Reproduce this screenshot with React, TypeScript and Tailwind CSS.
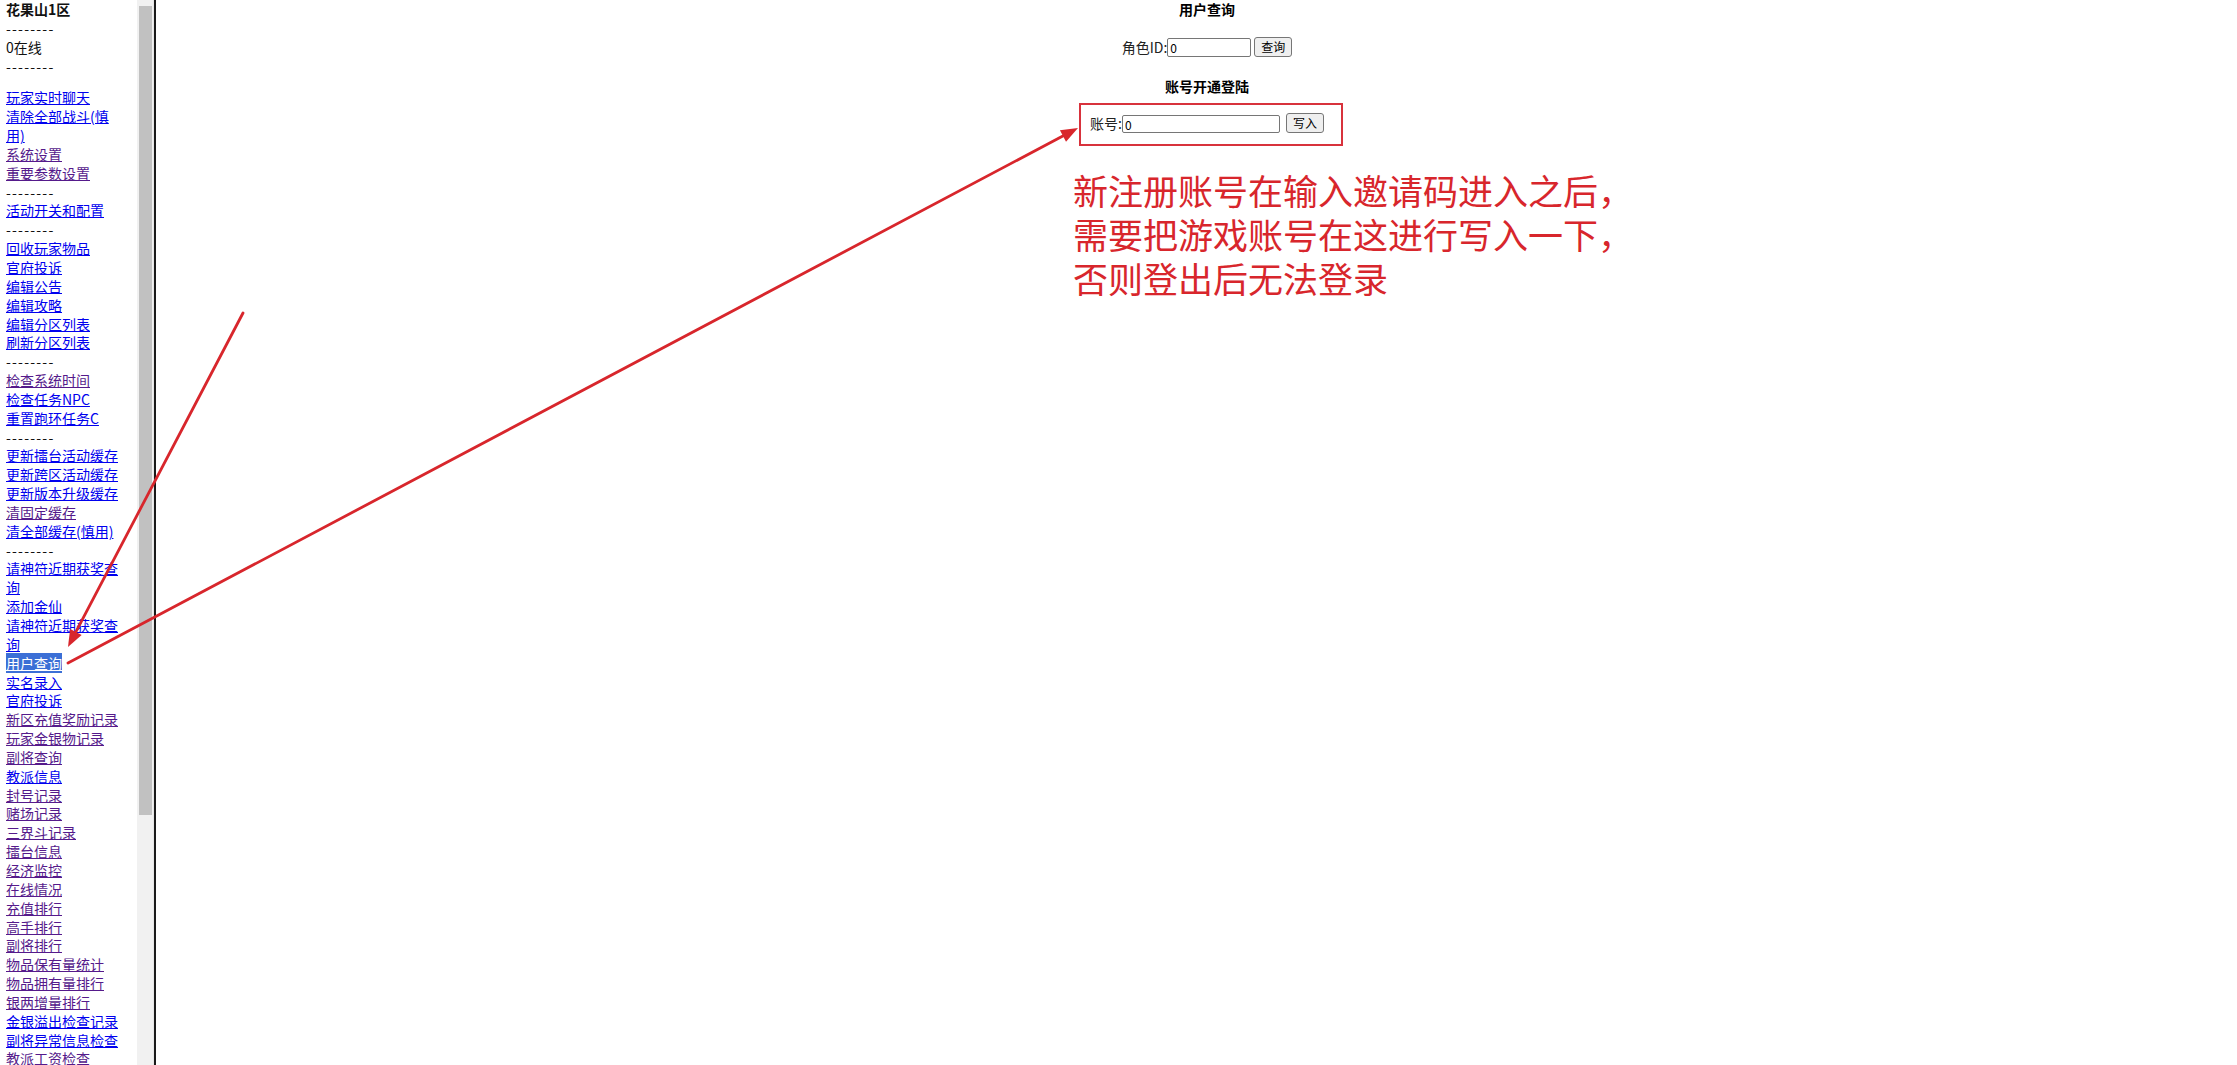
import React from 'react';

type NavItem =
  | { kind: 'link'; text: string; visited?: boolean; active?: boolean }
  | { kind: 'text'; text: string; bold?: boolean }
  | { kind: 'dash' }
  | { kind: 'gap' };

const b = (text: string): NavItem => ({ kind: 'link', text });
const p = (text: string): NavItem => ({ kind: 'link', text, visited: true });
const dash: NavItem = { kind: 'dash' };

const navItems: NavItem[] = [
  { kind: 'text', text: '花果山1区', bold: true },
  dash,
  { kind: 'text', text: '0在线' },
  dash,
  { kind: 'gap' },
  b('玩家实时聊天'),
  b('清除全部战斗(慎用)'),
  p('系统设置'),
  p('重要参数设置'),
  dash,
  b('活动开关和配置'),
  dash,
  b('回收玩家物品'),
  b('官府投诉'),
  b('编辑公告'),
  b('编辑攻略'),
  b('编辑分区列表'),
  b('刷新分区列表'),
  dash,
  p('检查系统时间'),
  b('检查任务NPC'),
  b('重置跑环任务C'),
  dash,
  b('更新擂台活动缓存'),
  b('更新跨区活动缓存'),
  b('更新版本升级缓存'),
  p('清固定缓存'),
  b('清全部缓存(慎用)'),
  dash,
  b('请神符近期获奖查询'),
  b('添加金仙'),
  b('请神符近期获奖查询'),
  { kind: 'link', text: '用户查询', active: true },
  b('实名录入'),
  b('官府投诉'),
  p('新区充值奖励记录'),
  p('玩家金银物记录'),
  p('副将查询'),
  b('教派信息'),
  p('封号记录'),
  p('赌场记录'),
  p('三界斗记录'),
  p('擂台信息'),
  p('经济监控'),
  p('在线情况'),
  p('充值排行'),
  p('高手排行'),
  p('副将排行'),
  p('物品保有量统计'),
  p('物品拥有量排行'),
  p('银两增量排行'),
  b('金银溢出检查记录'),
  b('副将异常信息检查'),
  p('教派工资检查'),
];

function Arrow({ x1, y1, x2, y2 }: { x1: number; y1: number; x2: number; y2: number }) {
  const dx = x2 - x1;
  const dy = y2 - y1;
  const len = Math.hypot(dx, dy);
  const ux = dx / len;
  const uy = dy / len;
  const L = 17;
  const W = 6.5;
  const bx = x2 - ux * L;
  const by = y2 - uy * L;
  const head = `${x2},${y2} ${bx + uy * W},${by - ux * W} ${bx - uy * W},${by + ux * W}`;
  return (
    <g>
      <line x1={x1} y1={y1} x2={bx + ux * 2} y2={by + uy * 2} stroke="#d8262c" strokeWidth={2.8} strokeLinecap="round" />
      <polygon points={head} fill="#d8262c" />
    </g>
  );
}

function Sidebar() {
  return (
    <div className="flex h-full shrink-0">
      <div className="w-[137px] overflow-hidden pl-[6px] text-[14px] leading-[18.84px] text-[#111]">
        <div className="w-[117px]">
          {navItems.map((item, i) => {
            if (item.kind === 'dash') {
              return (
                <div key={i} className="tracking-[1.2px]">
                  --------
                </div>
              );
            }
            if (item.kind === 'gap') return <div key={i} className="h-[13px]" />;
            if (item.kind === 'text') {
              return (
                <div key={i} className={item.bold ? 'font-bold' : ''}>
                  {item.text}
                </div>
              );
            }
            return (
              <div key={i}>
                <a
                  href="#"
                  className={
                    item.active
                      ? 'bg-[#3b6fd6] text-white underline'
                      : item.visited
                        ? 'text-[#551a8b] underline'
                        : 'text-[#0000ee] underline'
                  }
                >
                  {item.text}
                </a>
              </div>
            );
          })}
        </div>
      </div>
      {/* frame scrollbar */}
      <div className="flex w-[16px] justify-center bg-[#f1f1f1] pt-[6px]">
        <div className="h-[809px] w-[13px] bg-[#c1c1c1]" />
      </div>
      <div className="w-[1px] bg-[#e6e6e6]" />
      <div className="w-[2px] bg-[#1a1a1a]" />
    </div>
  );
}

function MainFrame() {
  return (
    <div className="flex flex-1 flex-col items-center pl-[21px] text-[14px] leading-[19px] text-[#222]">
      <div className="h-[19px] font-bold text-black">用户查询</div>
      <div className="mt-[18px] flex h-[20px] items-end">
        <span className="leading-[19px]">角色ID:</span>
        <input
          readOnly
          value="0"
          className="h-[19px] w-[84px] rounded-[2px] border border-[#767676] px-[2px] text-[12px] leading-none text-black outline-none"
        />
        <button className="ml-[3px] h-[20px] w-[38px] rounded-[3px] border border-[#767676] bg-[#efefef] text-[12px] leading-none text-black">
          查询
        </button>
      </div>
      <div className="mt-[19.5px] h-[19px] font-bold text-black">账号开通登陆</div>
      <div className="mt-[17.5px] flex h-[20px] items-end">
        <span className="leading-[19px]">账号:</span>
        <input
          readOnly
          value="0"
          className="h-[18px] w-[158px] rounded-[2px] border border-[#767676] px-[2px] text-[12px] leading-none text-black outline-none"
        />
        <button className="ml-[6px] h-[20px] w-[38px] rounded-[3px] border border-[#767676] bg-[#efefef] text-[12px] leading-none text-black">
          写入
        </button>
      </div>
    </div>
  );
}

export default function App() {
  return (
    <div
      className="relative flex h-[1065px] w-[2237px] overflow-hidden bg-white"
      style={{ fontFamily: '"Microsoft YaHei", "Noto Sans CJK SC", sans-serif' }}
    >
      <Sidebar />
      <MainFrame />

      {/* annotation overlay */}
      <div className="pointer-events-none absolute left-[1079px] top-[103px] h-[43px] w-[264px] border-2 border-[#d8323c]" />
      <div className="pointer-events-none absolute left-[1073px] top-[168px] whitespace-nowrap text-[35px] leading-[44px] text-[#d8262c]">
        <div>新注册账号在输入邀请码进入之后，</div>
        <div>需要把游戏账号在这进行写入一下，</div>
        <div>否则登出后无法登录</div>
      </div>
      <svg className="pointer-events-none absolute left-0 top-0" width={2237} height={1065}>
        <Arrow x1={243} y1={313} x2={68} y2={647} />
        <Arrow x1={68} y1={663} x2={1078} y2={128} />
      </svg>
    </div>
  );
}
